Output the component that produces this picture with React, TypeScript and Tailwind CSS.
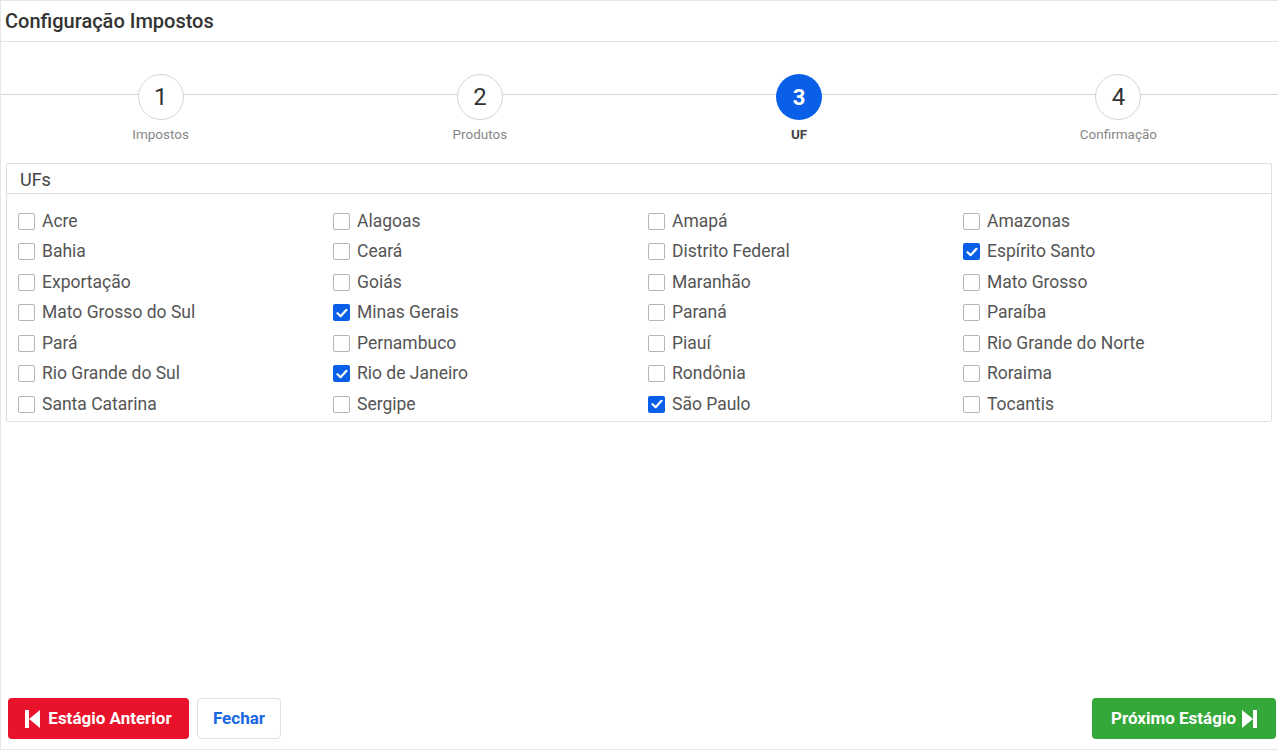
import React from "react";

const steps = [
  { n: "1", label: "Impostos", active: false },
  { n: "2", label: "Produtos", active: false },
  { n: "3", label: "UF", active: true },
  { n: "4", label: "Confirmação", active: false },
];

const ufs: [string, boolean][] = [
  ["Acre", false], ["Alagoas", false], ["Amapá", false], ["Amazonas", false],
  ["Bahia", false], ["Ceará", false], ["Distrito Federal", false], ["Espírito Santo", true],
  ["Exportação", false], ["Goiás", false], ["Maranhão", false], ["Mato Grosso", false],
  ["Mato Grosso do Sul", false], ["Minas Gerais", true], ["Paraná", false], ["Paraíba", false],
  ["Pará", false], ["Pernambuco", false], ["Piauí", false], ["Rio Grande do Norte", false],
  ["Rio Grande do Sul", false], ["Rio de Janeiro", true], ["Rondônia", false], ["Roraima", false],
  ["Santa Catarina", false], ["Sergipe", false], ["São Paulo", true], ["Tocantis", false],
];

function Box({ checked }: { checked: boolean }) {
  if (checked) {
    return (
      <span className="w-[17px] h-[17px] rounded-[2px] bg-[#0a5fe8] flex items-center justify-center shrink-0">
        <svg width="12" height="10" viewBox="0 0 12 10">
          <path d="M1.5 5.2 L4.6 8.2 L10.5 1.8" fill="none" stroke="white" strokeWidth="2.2" strokeLinecap="round" strokeLinejoin="round" />
        </svg>
      </span>
    );
  }
  return <span className="w-[17px] h-[17px] rounded-[2px] border border-[#b5b5b5] bg-white shrink-0" />;
}

export default function App() {
  return (
    <div
      className="w-[1278px] h-[750px] flex flex-col bg-white border-t border-l border-b border-[#e6e6e6] overflow-hidden"
      style={{ fontFamily: "Roboto, 'Liberation Sans', sans-serif" }}
    >
      <div className="h-[41px] shrink-0 border-b border-[#e3e3e3] flex items-center pl-[4px]">
        <span className="text-[20px] font-medium text-[#333] leading-none">Configuração Impostos</span>
      </div>

      <div className="relative mt-[32px] h-[89px] shrink-0">
        <div className="absolute left-0 right-0 top-[20px] h-px bg-[#d4d4d4]" />
        <div className="relative grid grid-cols-4">
          {steps.map((s) => (
            <div key={s.n} className="flex flex-col items-center">
              <div
                className={
                  s.active
                    ? "w-[46px] h-[46px] rounded-full bg-[#0a5fe8] text-white font-bold text-[22px] flex items-center justify-center"
                    : "w-[46px] h-[46px] rounded-full bg-white border border-[#d4d4d4] text-[#333] text-[24px] flex items-center justify-center"
                }
              >
                {s.n}
              </div>
              <span
                className={
                  s.active
                    ? "mt-[8px] text-[13.5px] font-bold text-[#444] leading-none"
                    : "mt-[8px] text-[13.5px] text-[#888] leading-none"
                }
              >
                {s.label}
              </span>
            </div>
          ))}
        </div>
      </div>

      <div className="ml-[5px] mr-[6px] border border-[#e0e0e0] rounded-[2px] shrink-0">
        <div className="h-[30px] border-b border-[#dcdcdc] flex items-center pl-[13px] pt-[2px]">
          <span className="text-[18px] text-[#444] leading-none">UFs</span>
        </div>
        <div className="grid grid-cols-[repeat(4,315px)] pl-[11px] pt-[12px] pb-[1px]">
          {ufs.map(([name, checked]) => (
            <div key={name} className="flex items-center h-[30.5px] gap-[7px]">
              <Box checked={checked} />
              <span className="text-[17.5px] text-[#555] leading-none">{name}</span>
            </div>
          ))}
        </div>
      </div>

      <div className="flex-1" />

      <div className="flex items-center justify-between pl-[7px] pr-[2px] pb-[10px]">
        <div className="flex items-center gap-[8px]">
          <button className="h-[41px] w-[181px] rounded-[4px] bg-[#e8132a] text-white font-bold text-[17px] flex items-center justify-center gap-[8px]">
            <svg width="15" height="18" viewBox="0 0 15 18">
              <rect x="0" y="0" width="4" height="18" fill="white" />
              <path d="M15 0 L4 9 L15 18 Z" fill="white" />
            </svg>
            Estágio Anterior
          </button>
          <button className="h-[41px] w-[84px] rounded-[4px] bg-white border border-[#e0e0e0] text-[#1668e3] font-bold text-[17px]">
            Fechar
          </button>
        </div>
        <button className="h-[41px] w-[184px] rounded-[4px] bg-[#35a83a] text-white font-bold text-[17px] flex items-center justify-center gap-[6px]">
          Próximo Estágio
          <svg width="15" height="18" viewBox="0 0 15 18">
            <path d="M0 0 L11 9 L0 18 Z" fill="white" />
            <rect x="11" y="0" width="4" height="18" fill="white" />
          </svg>
        </button>
      </div>
    </div>
  );
}
